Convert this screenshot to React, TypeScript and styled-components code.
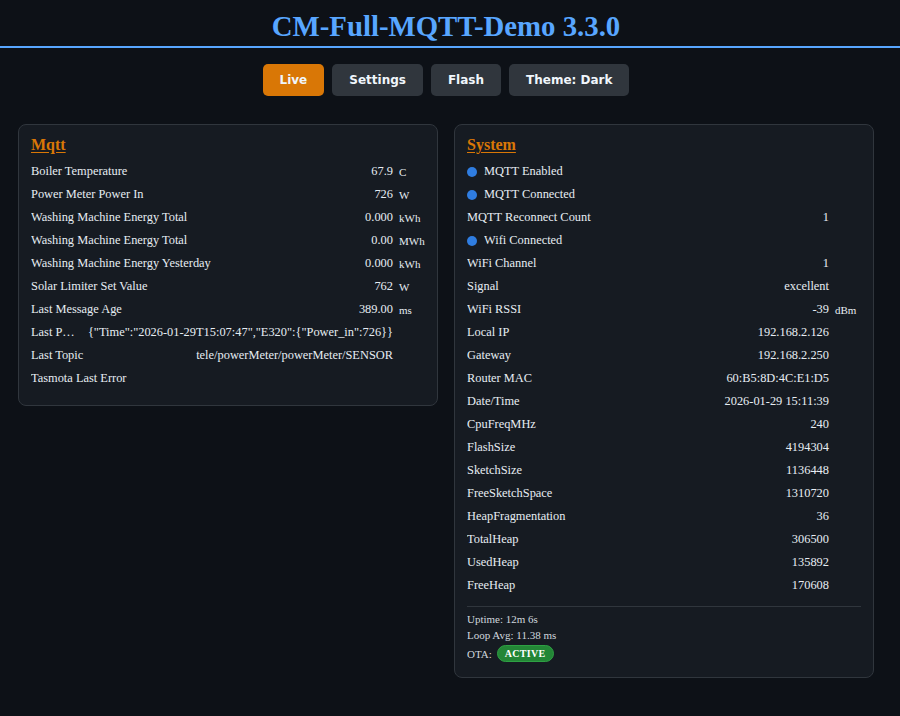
import styled, { createGlobalStyle } from "styled-components";

const GlobalStyle = createGlobalStyle`
  html, body {
    margin: 0;
    padding: 0;
    background: #0d1117;
  }
  body {
    color: #e6edf3;
    font-family: "Liberation Serif", "Times New Roman", serif;
  }
`;

const Page = styled.div`
  min-height: 716px;
  background: #0d1117;
`;

const Header = styled.header`
  border-bottom: 2px solid #58a6ff;
`;

const Title = styled.h1`
  margin: 0;
  padding: 11px 8px 5px 0;
  line-height: 30px;
  font-size: 28.8px;
  font-weight: 700;
  text-align: center;
  color: #58a6ff;
`;

const Nav = styled.nav`
  display: flex;
  justify-content: center;
  gap: 8px;
  margin-top: 16px;
  padding-right: 8px;
`;

const NavButton = styled.button<{ $active?: boolean }>`
  height: 32px;
  padding: 0 17px;
  border: none;
  border-radius: 5px;
  background: ${({ $active }) => ($active ? "#d97706" : "#30363d")};
  color: #f0f6fc;
  font-family: "DejaVu Sans", sans-serif;
  font-size: 12px;
  font-weight: 700;
  cursor: pointer;
`;

const Grid = styled.main`
  display: grid;
  grid-template-columns: repeat(2, 420px);
  gap: 16px;
  align-items: start;
  padding: 28px 18px 0;
`;

const Card = styled.section`
  background: #161b22;
  border: 1px solid #30363d;
  border-radius: 8px;
  padding: 9px 12px 15px;
`;

const CardTitle = styled.h2`
  margin: 0 0 4px;
  line-height: 22px;
  font-size: 16px;
  font-weight: 700;
  color: #d97706;
  text-decoration: underline;
  text-underline-offset: 2px;
`;

const Row = styled.div`
  display: flex;
  align-items: center;
  height: 23px;
  font-size: 12.4px;
`;

const Label = styled.span`
  flex: 1;
  min-width: 0;
  white-space: nowrap;
  overflow: hidden;
  text-overflow: ellipsis;
`;

const Value = styled.span`
  margin-left: 12px;
  white-space: nowrap;
  text-align: right;
`;

const Unit = styled.span`
  width: 26px;
  margin-left: 6px;
  font-size: 11px;
  white-space: nowrap;
`;

const Dot = styled.span`
  width: 10px;
  height: 10px;
  margin-right: 7px;
  border-radius: 50%;
  background: #2f7de1;
  flex-shrink: 0;
`;

const Divider = styled.hr`
  border: none;
  border-top: 1px solid #30363d;
  margin: 9px 0 4px;
`;

const FooterLine = styled.div<{ $spaced?: boolean }>`
  display: flex;
  align-items: center;
  gap: 5px;
  margin-top: ${({ $spaced }) => ($spaced ? "2px" : "0")};
  font-size: 11px;
  line-height: 16px;
  color: #d0d7de;
`;

const Badge = styled.span`
  padding: 1px 7px;
  border: 1px solid #2ea043;
  border-radius: 9px;
  background: #238636;
  color: #ffffff;
  font-size: 10px;
  font-weight: 700;
  letter-spacing: 0.3px;
  line-height: 13px;
`;

type Item =
  | { kind: "value"; label: string; value: string; unit?: string }
  | { kind: "flag"; label: string };

const mqttItems: Item[] = [
  { kind: "value", label: "Boiler Temperature", value: "67.9", unit: "C" },
  { kind: "value", label: "Power Meter Power In", value: "726", unit: "W" },
  { kind: "value", label: "Washing Machine Energy Total", value: "0.000", unit: "kWh" },
  { kind: "value", label: "Washing Machine Energy Total", value: "0.00", unit: "MWh" },
  { kind: "value", label: "Washing Machine Energy Yesterday", value: "0.000", unit: "kWh" },
  { kind: "value", label: "Solar Limiter Set Value", value: "762", unit: "W" },
  { kind: "value", label: "Last Message Age", value: "389.00", unit: "ms" },
  {
    kind: "value",
    label: "Last Payload",
    value: '{"Time":"2026-01-29T15:07:47","E320":{"Power_in":726}}',
  },
  { kind: "value", label: "Last Topic", value: "tele/powerMeter/powerMeter/SENSOR" },
  { kind: "value", label: "Tasmota Last Error", value: "" },
];

const systemItems: Item[] = [
  { kind: "flag", label: "MQTT Enabled" },
  { kind: "flag", label: "MQTT Connected" },
  { kind: "value", label: "MQTT Reconnect Count", value: "1" },
  { kind: "flag", label: "Wifi Connected" },
  { kind: "value", label: "WiFi Channel", value: "1" },
  { kind: "value", label: "Signal", value: "excellent" },
  { kind: "value", label: "WiFi RSSI", value: "-39", unit: "dBm" },
  { kind: "value", label: "Local IP", value: "192.168.2.126" },
  { kind: "value", label: "Gateway", value: "192.168.2.250" },
  { kind: "value", label: "Router MAC", value: "60:B5:8D:4C:E1:D5" },
  { kind: "value", label: "Date/Time", value: "2026-01-29 15:11:39" },
  { kind: "value", label: "CpuFreqMHz", value: "240" },
  { kind: "value", label: "FlashSize", value: "4194304" },
  { kind: "value", label: "SketchSize", value: "1136448" },
  { kind: "value", label: "FreeSketchSpace", value: "1310720" },
  { kind: "value", label: "HeapFragmentation", value: "36" },
  { kind: "value", label: "TotalHeap", value: "306500" },
  { kind: "value", label: "UsedHeap", value: "135892" },
  { kind: "value", label: "FreeHeap", value: "170608" },
];

function ItemRow({ item }: { item: Item }) {
  if (item.kind === "flag") {
    return (
      <Row>
        <Dot />
        <Label>{item.label}</Label>
      </Row>
    );
  }
  return (
    <Row>
      <Label>{item.label}</Label>
      <Value>{item.value}</Value>
      <Unit>{item.unit ?? ""}</Unit>
    </Row>
  );
}

export default function App() {
  return (
    <Page>
      <GlobalStyle />
      <Header>
        <Title>CM-Full-MQTT-Demo 3.3.0</Title>
      </Header>
      <Nav>
        <NavButton $active>Live</NavButton>
        <NavButton>Settings</NavButton>
        <NavButton>Flash</NavButton>
        <NavButton>Theme: Dark</NavButton>
      </Nav>
      <Grid>
        <Card>
          <CardTitle>Mqtt</CardTitle>
          {mqttItems.map((item, i) => (
            <ItemRow key={i} item={item} />
          ))}
        </Card>
        <Card>
          <CardTitle>System</CardTitle>
          {systemItems.map((item, i) => (
            <ItemRow key={i} item={item} />
          ))}
          <Divider />
          <FooterLine>Uptime: 12m 6s</FooterLine>
          <FooterLine>Loop Avg: 11.38 ms</FooterLine>
          <FooterLine $spaced>
            OTA: <Badge>ACTIVE</Badge>
          </FooterLine>
        </Card>
      </Grid>
    </Page>
  );
}
